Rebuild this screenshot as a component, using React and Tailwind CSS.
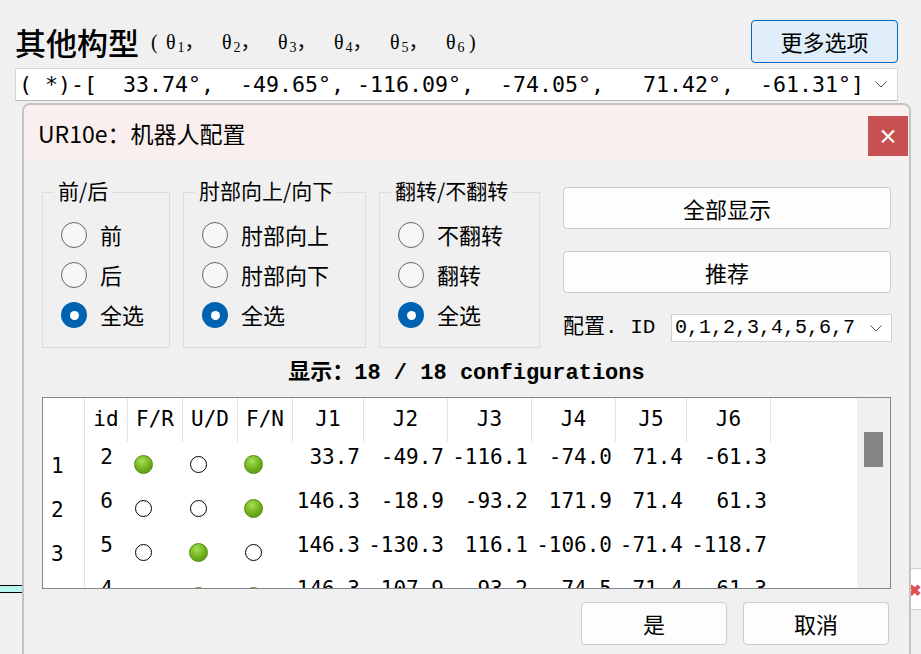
import React from 'react';

const cjk = "font-['Noto_Sans_CJK_SC','Noto_Sans',sans-serif]";

const rows = [
  { n: 1, id: 2, fr: true, ud: false, fn: true, j: ['33.7', '-49.7', '-116.1', '-74.0', '71.4', '-61.3'] },
  { n: 2, id: 6, fr: false, ud: false, fn: true, j: ['146.3', '-18.9', '-93.2', '171.9', '71.4', '61.3'] },
  { n: 3, id: 5, fr: false, ud: true, fn: false, j: ['146.3', '-130.3', '116.1', '-106.0', '-71.4', '-118.7'] },
  { n: 4, id: 4, fr: false, ud: true, fn: true, j: ['146.3', '-107.9', '-93.2', '-74.5', '71.4', '61.3'] },
];

// widths for J1..J6
const jw = ['w-[71px]', 'w-[84px]', 'w-[84px]', 'w-[84px]', 'w-[71px]', 'w-[84px]'];

function Chevron() {
  return (
    <svg width="12" height="7" viewBox="0 0 12 7" className="shrink-0">
      <polyline points="0.5,0.5 6,6 11.5,0.5" fill="none" stroke="#555" strokeWidth="1" />
    </svg>
  );
}

function Radio({ checked, label }) {
  return (
    <div className="h-[40px] flex items-center gap-[13px]">
      {checked ? (
        <div className="w-[26px] h-[26px] rounded-full bg-[#0063b1] flex items-center justify-center">
          <div className="w-[9px] h-[9px] rounded-full bg-white" />
        </div>
      ) : (
        <div className="w-[26px] h-[26px] rounded-full border-[1.5px] border-[#666] bg-[#f7f7f7]" />
      )}
      <span className="text-[22px] leading-[30px] -mt-[2px]">{label}</span>
    </div>
  );
}

function Group({ title, items, width }) {
  return (
    <div className={`relative mt-[5px] border border-[#dcdcdc] pl-[18px] pt-[22px] pb-[12px] ${width}`}>
      <span className="absolute left-[11px] -top-[18px] px-[4px] bg-[#f0f0f0] text-[21px] leading-[30px] whitespace-nowrap">
        {title}
      </span>
      <Radio label={items[0]} />
      <Radio label={items[1]} />
      <Radio label="全选" checked />
    </div>
  );
}

function Dot({ on }) {
  return (
    <div className="w-[19px] h-[19px] flex items-center justify-center">
      {on ? (
        <div className="w-[19px] h-[19px] rounded-full border border-[#4f8c0c] bg-[radial-gradient(circle_at_40%_30%,#a8de55,#6eb01c_55%,#4f900b)]" />
      ) : (
        <div className="w-[17px] h-[17px] rounded-full border border-black bg-white" />
      )}
    </div>
  );
}

function Table() {
  const mono = "font-['DejaVu_Sans_Mono',monospace] text-[21px] text-black";
  return (
    <div className="ml-[18px] mt-[8px] w-[849px] h-[192px] border border-[#828790] bg-white flex overflow-hidden">
      <div className={`flex-1 flex flex-col ${mono}`}>
        {/* header */}
        <div className="flex h-[44px] shrink-0">
          <div className="w-[42px] border-r border-[#e3e3e3]" />
          <div className="w-[43px] border-r border-[#e3e3e3] flex items-center justify-center">id</div>
          <div className="w-[55px] border-r border-[#e3e3e3] flex items-center justify-center">F/R</div>
          <div className="w-[55px] border-r border-[#e3e3e3] flex items-center justify-center">U/D</div>
          <div className="w-[55px] border-r border-[#e3e3e3] flex items-center justify-center">F/N</div>
          {['J1', 'J2', 'J3', 'J4', 'J5', 'J6'].map((h, i) => (
            <div key={h} className={`${jw[i]} border-r border-[#e3e3e3] flex items-center justify-center`}>{h}</div>
          ))}
        </div>
        {rows.map((r) => (
          <div key={r.n} className="flex h-[44px] shrink-0">
            <div className="w-[42px] border-r border-[#e3e3e3] flex items-center pl-[8px] pt-[6px]">{r.n}</div>
            <div className="w-[43px] text-center pt-[3px] leading-[24px]">{r.id}</div>
            <div className="w-[55px] flex items-center pl-[6px]"><Dot on={r.fr} /></div>
            <div className="w-[55px] flex items-center pl-[6px]"><Dot on={r.ud} /></div>
            <div className="w-[55px] flex items-center pl-[6px]"><Dot on={r.fn} /></div>
            {r.j.map((v, i) => (
              <div key={i} className={`${jw[i]} text-right pr-[4px] pt-[3px] leading-[24px]`}>{v}</div>
            ))}
          </div>
        ))}
      </div>
      <div className="w-[33px] h-full bg-[#f0f0f0] shrink-0">
        <div className="mt-[34px] ml-[7px] w-[19px] h-[35px] bg-[#858585]" />
      </div>
    </div>
  );
}

export default function App() {
  const thetas = ['1', '2', '3', '4', '5', '6'];
  return (
    <div className={`relative w-[921px] h-[654px] overflow-hidden bg-[#f0f0f0] text-black ${cjk}`}>
      {/* background window */}
      <div className="pl-[15px] pr-[23px]">
        <div className="mt-[20px] h-[43px] flex items-center justify-between">
          <div className="flex items-center">
            <span className="text-[31px] leading-[40px] font-medium">其他构型</span>
            <span className="ml-[12px] text-[20px] leading-[30px] flex items-center font-['Liberation_Serif','Noto_Sans_CJK_SC',serif]">
              <span className="inline-block w-[15px]">(</span>
              {thetas.map((t, i) => (
                <span key={t} className={i < 5 ? 'inline-block w-[56px]' : 'inline-block w-[23px]'}>
                  θ<sub className="text-[14px] ml-[2px]">{t}</sub>{i < 5 ? '，' : ''}
                </span>
              ))}
              <span>)</span>
            </span>
          </div>
          <button className="w-[147px] h-[43px] bg-[#e0eef9] border border-[#0067c0] rounded-[4px] text-[22px]">
            更多选项
          </button>
        </div>
        <div className="mt-[5px] h-[33px] border border-[#d6d6d6] border-b-[#b8b8b8] bg-white flex items-center justify-between pl-[3px] pr-[10px]">
          <span className="font-['DejaVu_Sans_Mono',monospace] text-[21.6px] whitespace-pre leading-[30px]">
            {'( *)-[  33.74°,  -49.65°, -116.09°,  -74.05°,   71.42°,  -61.31°]'}
          </span>
          <Chevron />
        </div>
      </div>
      <div className="mt-[467px] h-[42px] flex items-center">
        <div className="flex-1 h-[8px] border-y border-black bg-[#b8f5ec]" />
        <div className="w-[24px] h-full bg-white border-y border-[#cfcfcf] flex items-center justify-end text-[#e05050] text-[16px] font-bold">
          ✖
        </div>
      </div>

      {/* dialog */}
      <div className="absolute left-[22px] top-[103px] w-[889px] h-[580px] border-2 border-[#c3c3c3] rounded-t-[8px] bg-[#f0f0f0] overflow-hidden">
        <div className="h-[56px] bg-[#f9efee] flex items-start justify-between">
          <span className="pl-[14px] mt-[13px] text-[23px] leading-[30px]">UR10e：机器人配置</span>
          <button className="mt-[11px] mr-[1px] w-[40px] h-[40px] bg-[#c75050] text-white text-[20px] font-bold flex items-center justify-center">
            ×
          </button>
        </div>
        <div className="pt-[26px] pl-[18px] flex items-start">
          <Group title="前/后" items={['前', '后']} width="w-[128px]" />
          <div className="w-[13px]" />
          <Group title="肘部向上/向下" items={['肘部向上', '肘部向下']} width="w-[183px]" />
          <div className="w-[13px]" />
          <Group title="翻转/不翻转" items={['不翻转', '翻转']} width="w-[161px]" />
          <div className="ml-[23px] w-[329px] flex flex-col">
            <button className="w-[328px] h-[42px] border border-[#cccccc] bg-[#fdfdfd] rounded-[4px] text-[22px]">全部显示</button>
            <button className="mt-[22px] w-[328px] h-[42px] border border-[#cccccc] bg-[#fdfdfd] rounded-[4px] text-[22px]">推荐</button>
            <div className="mt-[21px] h-[28px] flex items-center justify-between">
              <span className="font-['Liberation_Mono','Noto_Sans_CJK_SC',monospace] text-[21px] whitespace-pre">配置. ID</span>
              <div className="w-[221px] h-[28px] bg-white border border-[#d0d0d0] flex items-center justify-between pl-[3px] pr-[9px]">
                <span className="font-['Liberation_Mono',monospace] text-[20px]">0,1,2,3,4,5,6,7</span>
                <Chevron />
              </div>
            </div>
          </div>
        </div>
        <div className="mt-[11px] leading-[30px] text-center font-bold font-['Liberation_Mono','Noto_Sans_CJK_SC',monospace] text-[22px] whitespace-pre">
          显示：18 / 18 configurations
        </div>
        <Table />
        <div className="mt-[13px] pr-[20px] flex justify-end gap-[16px]">
          <button className="w-[146px] h-[43px] border border-[#cccccc] bg-[#fdfdfd] rounded-[4px] text-[22px]">是</button>
          <button className="w-[146px] h-[43px] border border-[#cccccc] bg-[#fdfdfd] rounded-[4px] text-[22px]">取消</button>
        </div>
      </div>
    </div>
  );
}
